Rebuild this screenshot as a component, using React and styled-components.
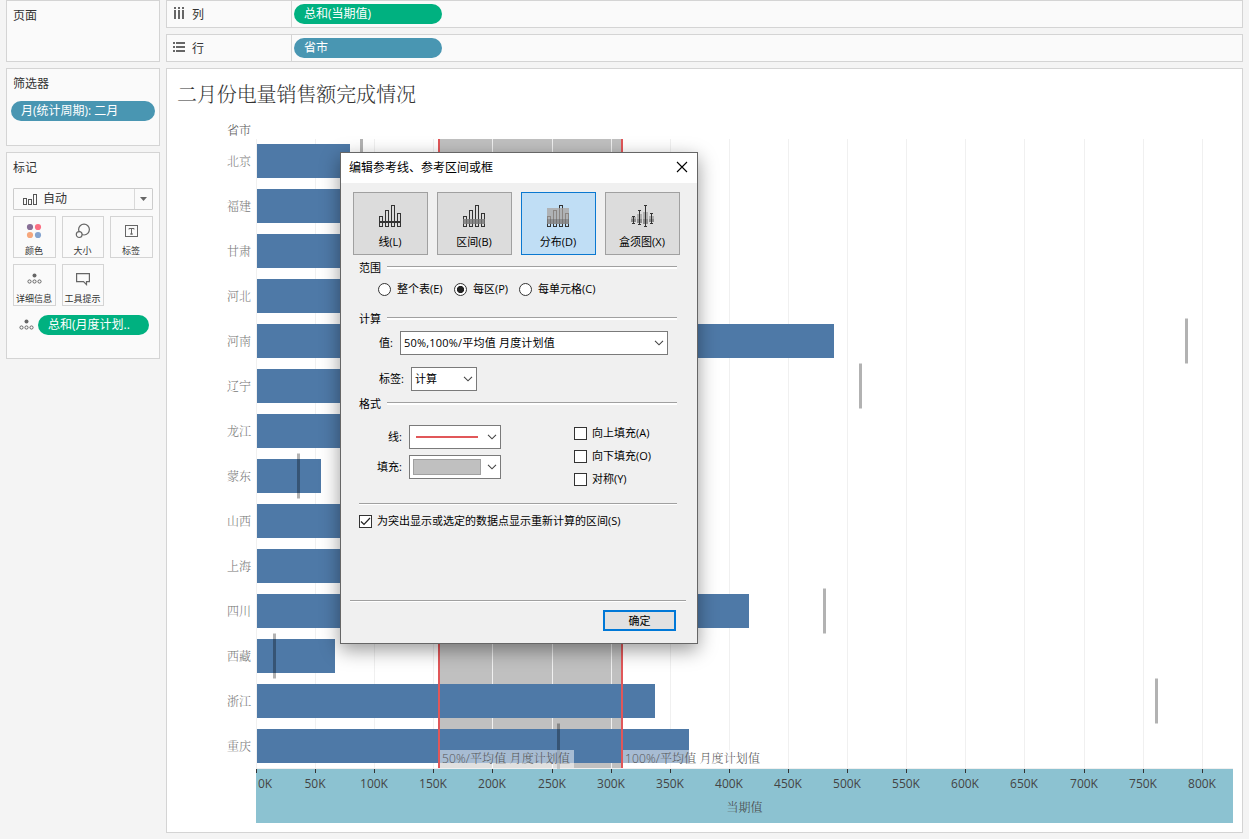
import React from "react";
import styled, { createGlobalStyle, css } from "styled-components";

const UI_FONT = "\"Open Sans\", \"Noto Sans CJK SC\", sans-serif";
const VIZ_FONT = "\"Open Sans\", \"Noto Serif CJK SC\", \"Noto Sans CJK SC\", sans-serif";

const ROW_HEIGHT = 45;
const BAR_HEIGHT = 34;
const PLOT_WIDTH = 977;
const STEP_WIDTH = 59.11;

// bar and target are lengths in px from the zero line
const PROVINCES = [
  { name: "北京", bar: 93, target: 104 },
  { name: "福建", bar: 210 },
  { name: "甘肃", bar: 190 },
  { name: "河北", bar: 330 },
  { name: "河南", bar: 577, target: 929 },
  { name: "辽宁", bar: 300, target: 603 },
  { name: "龙江", bar: 170 },
  { name: "蒙东", bar: 64, target: 41 },
  { name: "山西", bar: 260 },
  { name: "上海", bar: 240 },
  { name: "四川", bar: 492, target: 567 },
  { name: "西藏", bar: 78, target: 17 },
  { name: "浙江", bar: 398, target: 899 },
  { name: "重庆", bar: 432, target: 301 },
];

const PLOT_HEIGHT = PROVINCES.length * ROW_HEIGHT;
const TICKS = Array.from({ length: 17 }, (_, index) => ({
  label: `${index * 50}K`,
  x: Math.round(index * STEP_WIDTH),
}));

const REFERENCE_LINES = [
  { x: 182, label: "50%/平均值 月度计划值", width: 134, length: 128 },
  { x: 365, label: "100%/平均值 月度计划值", width: 140, length: 135 },
];

const BARS = [[0, 11], [6, 5], [12, 0], [18, 8]];
const BOXES = [
  { x: 0, top: 12, bottom: 17, min: 11, max: 19 },
  { x: 6, top: 9, bottom: 18, min: 5, max: 20 },
  { x: 12, top: 7, bottom: 19, min: 0, max: 22 },
  { x: 18, top: 11, bottom: 17, min: 8, max: 19 },
];

function ReferenceIcon({ type }) {
  if (type === "box") {
    return (
      <svg width="23" height="22" shapeRendering="crispEdges">
        {BOXES.map(({ x, top, bottom, min, max }) => (
          <g key={x}>
            <rect x={x} y={top} width="5" height={bottom - top} fill="#b0b0b0" />
            <rect x={x} y="14" width="5" height={bottom - 14} fill="#8e8e8e" />
            <rect x={x + 2} y={min} width="1" height={max - min} fill="#333" />
            <rect x={x + 1} y={min} width="3" height="1" fill="#333" />
            <rect x={x + 1} y={max - 1} width="3" height="1" fill="#333" />
          </g>
        ))}
      </svg>
    );
  }

  return (
    <svg width="22" height="22" shapeRendering="crispEdges">
      {BARS.map(([x, y]) => (
        <rect key={x} x={x + 0.5} y={y + 0.5} width="3" height={21 - y} fill="none" stroke="#333" />
      ))}
      {type === "line" && <rect y="16" width="22" height="2" fill="#333" />}
      {type === "band" && <rect y="14" width="22" height="5" fill="#777" fillOpacity="0.8" />}
      {type === "distribution" && (
        <>
          <rect y="3" width="22" height="11" fill="#a9a39f" fillOpacity="0.75" />
          <rect y="14" width="22" height="5" fill="#858381" fillOpacity="0.85" />
        </>
      )}
    </svg>
  );
}

function DetailIcon() {
  return (
    <svg width="15" height="12" fill="none" stroke="#666">
      <circle cx="7.5" cy="2.5" r="2" fill="#666" stroke="none" />
      <circle cx="2.5" cy="8.5" r="1.6" />
      <circle cx="7.5" cy="8.5" r="1.6" />
      <circle cx="12.5" cy="8.5" r="1.6" />
    </svg>
  );
}

function ColorIcon() {
  return (
    <svg width="16" height="16">
      <circle cx="4" cy="4" r="3.1" fill="#876f96" />
      <circle cx="12" cy="4" r="3.1" fill="#fb6f83" />
      <circle cx="4" cy="12" r="3.1" fill="#f6a77c" />
      <circle cx="12" cy="12" r="3.1" fill="#85a4cf" />
    </svg>
  );
}

function SizeIcon() {
  return (
    <svg width="16" height="16" fill="none" stroke="#666" strokeWidth="1.2">
      <circle cx="9" cy="6.6" r="5.4" />
      <circle cx="4.2" cy="11.6" r="2.9" fill="#fafafa" />
    </svg>
  );
}

function LabelIcon() {
  return (
    <svg width="14" height="14" fill="none" stroke="#666">
      <rect x="1.5" y="1.5" width="12" height="11" />
      <path d="M5 5.5v-1h5v1M7.5 4.5v6M6 10h3" />
    </svg>
  );
}

function TooltipIcon() {
  return (
    <svg width="16" height="14" fill="none" stroke="#666" strokeWidth="1.2">
      <path d="M1.6 1.6h12.8v8h-2.9v3l-3-3h-6.900z" />
    </svg>
  );
}

function Chevron() {
  return (
    <svg width="10" height="6" fill="none" stroke="#444" strokeWidth="1.1">
      <path d="M1 0.8l4 4 4-4" />
    </svg>
  );
}

function ShelfIcon({ isRows }) {
  if (isRows) {
    return (
      <svg width="12" height="10" fill="#666" shapeRendering="crispEdges">
        {[0, 4, 8].map((y) => (
          <g key={y}>
            <rect y={y} width="2" height="2" />
            <rect x="3" y={y} width="9" height="2" />
          </g>
        ))}
      </svg>
    );
  }

  return (
    <svg width="12" height="12" fill="#666" shapeRendering="crispEdges">
      {[1, 5, 9].map((x) => (
        <g key={x}>
          <rect x={x} width="2" height="2" />
          <rect x={x} y="3" width="2" height="9" />
        </g>
      ))}
    </svg>
  );
}

function Plot() {
  return (
    <svg width={PLOT_WIDTH} height={PLOT_HEIGHT}>
      <g shapeRendering="crispEdges">
        <rect x="182" width="185" height={PLOT_HEIGHT - 1} fill="#c0c0c0" />
        {TICKS.map(({ x }) => (
          <rect key={x} x={x} width="1" height={PLOT_HEIGHT} fill="#f0f0f0" />
        ))}
        <rect y={PLOT_HEIGHT - 1} width={PLOT_WIDTH} height="1" fill="#f0f0f0" />
      </g>
      {PROVINCES.map(({ name, bar, target }, index) => (
        <g key={name} transform={`translate(0 ${index * ROW_HEIGHT})`}>
          <rect x="1" y="5" width={bar} height={BAR_HEIGHT} fill="#4e79a7" />
          {target && <rect x={target} y="-0.5" width="3" height={ROW_HEIGHT} fillOpacity="0.3" />}
        </g>
      ))}
      {REFERENCE_LINES.map(({ x, label, width, length }) => (
        <g key={x}>
          <rect x={x} width="2" height={PLOT_HEIGHT - 1} fill="#e15759" />
          <rect x={x + 2} y="611" width={width} height="18" fill="#fff" fillOpacity="0.5" />
          <ReferenceLabel x={x + 4} y="624" textLength={length}>{label}</ReferenceLabel>
        </g>
      ))}
    </svg>
  );
}

function Axis() {
  return (
    <AxisWrapper>
      <svg width={PLOT_WIDTH} height="28">
        {TICKS.map(({ x, label }, index) => (
          <g key={label}>
            <rect x={x} width="1" height="4" fill="#333" shapeRendering="crispEdges" />
            <TickLabel x={index === 0 ? 9 : x} y="19">{label}</TickLabel>
          </g>
        ))}
      </svg>
      <AxisTitle>当期值</AxisTitle>
    </AxisWrapper>
  );
}

function ReferenceDialog() {
  return (
    <Dialog role="dialog">
      <DialogHeader>
        编辑参考线、参考区间或框
        <CloseIcon width="12" height="12">
          <path d="M1 1l10 10M11 1L1 11" />
        </CloseIcon>
      </DialogHeader>
      <TypeButtons>
        <TypeButton><ReferenceIcon type="line" />线(L)</TypeButton>
        <TypeButton><ReferenceIcon type="band" />区间(B)</TypeButton>
        <TypeButton $isActive><ReferenceIcon type="distribution" />分布(D)</TypeButton>
        <TypeButton><ReferenceIcon type="box" />盒须图(X)</TypeButton>
      </TypeButtons>
      <Group $top={5}>范围</Group>
      <RadioRow>
        <Choice $width={76}><Radio />整个表(E)</Choice>
        <Choice $width={65}><Radio $isChecked />每区(P)</Choice>
        <Choice><Radio />每单元格(C)</Choice>
      </RadioRow>
      <Group $top={14}>计算</Group>
      <Field $top={4}>
        <FieldLabel $width={52}>值:</FieldLabel>
        <Select $width={268}>
          <WideText>50%,100%/平均值 月度计划值</WideText>
          <Chevron />
        </Select>
      </Field>
      <Field $top={12}>
        <FieldLabel $width={63}>标签:</FieldLabel>
        <Select $width={66}>
          计算
          <Chevron />
        </Select>
      </Field>
      <Group $top={5}>格式</Group>
      <FormatRow>
        <div>
          <Field>
            <FieldLabel $width={61}>线:</FieldLabel>
            <Select $width={92}>
              <LineSample />
              <Chevron />
            </Select>
          </Field>
          <Field $top={6}>
            <FieldLabel $width={61}>填充:</FieldLabel>
            <Select $width={92}>
              <FillSample />
              <Chevron />
            </Select>
          </Field>
        </div>
        <FillOptions>
          <Choice $gap={5}><Checkbox />向上填充(A)</Choice>
          <Choice $gap={5}><Checkbox />向下填充(O)</Choice>
          <Choice $gap={5}><Checkbox />对称(Y)</Choice>
        </FillOptions>
      </FormatRow>
      <Rule $top={16} $side={18} />
      <Recalculate $gap={5}>
        <Checkbox>
          <svg width="11" height="11" fill="none" stroke="#222" strokeWidth="1.2">
            <path d="M1 5.5l3 3 6-6.5" />
          </svg>
        </Checkbox>
        为突出显示或选定的数据点显示重新计算的区间(S)
      </Recalculate>
      <Rule $top={71} $side={9} />
      <DialogFooter>
        <OkButton>确定</OkButton>
      </DialogFooter>
    </Dialog>
  );
}

function App() {
  return (
    <Page>
      <GlobalStyle />
      <Sidebar>
        <Card $height={62}>
          <CardTitle>页面</CardTitle>
        </Card>
        <Card $height={78}>
          <CardTitle>筛选器</CardTitle>
          <FilterPill $color="#4996b2" $width={144}>月(统计周期): 二月</FilterPill>
        </Card>
        <Card $height={207}>
          <CardTitle>标记</CardTitle>
          <MarkSelect>
            <svg width="14" height="13" fill="none" stroke="#555" shapeRendering="crispEdges">
              <rect x="0.5" y="5.5" width="3" height="6" />
              <rect x="5.5" y="6.5" width="3" height="5" />
              <rect x="10.5" y="1.5" width="3" height="10" />
            </svg>
            <span>自动</span>
            <MarkArrow>
              <svg width="7" height="4" fill="#666"><path d="M0 0h7L3.5 4z" /></svg>
            </MarkArrow>
          </MarkSelect>
          <MarkGrid>
            <MarkButton><MarkIcon><ColorIcon /></MarkIcon>颜色</MarkButton>
            <MarkButton><MarkIcon><SizeIcon /></MarkIcon>大小</MarkButton>
            <MarkButton><MarkIcon><LabelIcon /></MarkIcon>标签</MarkButton>
            <MarkButton><MarkIcon><DetailIcon /></MarkIcon>详细信息</MarkButton>
            <MarkButton><MarkIcon><TooltipIcon /></MarkIcon>工具提示</MarkButton>
          </MarkGrid>
          <DetailRow>
            <DetailIcon />
            <Pill $color="#00b180" $width={111}>总和(月度计划..</Pill>
          </DetailRow>
        </Card>
      </Sidebar>
      <Main>
        <Shelf>
          <ShelfLabel><ShelfIcon /><span>列</span></ShelfLabel>
          <Pill $color="#00b180" $width={148}>总和(当期值)</Pill>
        </Shelf>
        <Shelf>
          <ShelfLabel><ShelfIcon isRows /><span>行</span></ShelfLabel>
          <Pill $color="#4996b2" $width={148}>省市</Pill>
        </Shelf>
        <Viz>
          <VizTitle>二月份电量销售额完成情况</VizTitle>
          <RowHeader>省市</RowHeader>
          <ChartBody>
            <RowLabels>
              {PROVINCES.map(({ name }) => <RowLabel key={name}>{name}</RowLabel>)}
            </RowLabels>
            <div>
              <Plot />
              <Axis />
            </div>
          </ChartBody>
        </Viz>
      </Main>
      <ReferenceDialog />
    </Page>
  );
}

const GlobalStyle = createGlobalStyle`
  * {
    box-sizing: border-box;
  }

  body {
    margin: 0;
    overflow: hidden;
  }

  svg {
    display: block;
    flex: none;
  }

  button {
    margin: 0;
    padding: 0;
    color: inherit;
    font: inherit;
  }
`;

const Page = styled.div`
  position: relative;
  display: flex;
  gap: 6px;
  width: 1249px;
  height: 839px;
  padding: 0 6px;
  background: #f4f4f4;
  color: #333;
  font: 12px/18px ${UI_FONT};
  white-space: nowrap;
`;

const Sidebar = styled.aside`
  display: flex;
  flex-direction: column;
  gap: 6px;
  width: 154px;
`;

const Card = styled.section`
  height: ${({ $height }) => $height}px;
  border: 1px solid #d4d4d4;
  background: #fafafa;
`;

const CardTitle = styled.div`
  padding: 6px 6px 0;
`;

const Pill = styled.div`
  flex: none;
  width: ${({ $width }) => $width}px;
  height: 20px;
  padding-left: 10px;
  border-radius: 10px;
  background: ${({ $color }) => $color};
  color: #fff;
  line-height: 20px;
`;

const FilterPill = styled(Pill)`
  margin: 8px 0 0 4px;
`;

const MarkSelect = styled.div`
  display: flex;
  align-items: center;
  gap: 6px;
  height: 22px;
  margin: 11px 6px 6px;
  padding-left: 9px;
  border: 1px solid #ccc;
  border-radius: 1px;
`;

const MarkArrow = styled.div`
  display: flex;
  align-items: center;
  justify-content: center;
  width: 18px;
  height: 20px;
  margin-left: auto;
  border-left: 1px solid #d9d9d9;
`;

const MarkGrid = styled.div`
  display: grid;
  grid-template-columns: 43px 42px 43px;
  gap: 6px;
  padding-left: 6px;
`;

const MarkButton = styled.button`
  height: 42px;
  padding-right: 1px;
  border: 1px solid #d4d4d4;
  background: #fafafa;
  font-size: 9px;
  line-height: 12px;
`;

const MarkIcon = styled.div`
  display: flex;
  align-items: center;
  justify-content: center;
  height: 28px;
`;

const DetailRow = styled.div`
  display: flex;
  align-items: center;
  gap: 4px;
  margin: 9px 0 0 12px;
`;

const Main = styled.main`
  display: flex;
  flex-direction: column;
  gap: 6px;
  width: 1077px;
`;

const Shelf = styled.div`
  display: flex;
  align-items: center;
  height: 28px;
  border: 1px solid #d4d4d4;
  background: #fafafa;
`;

const ShelfLabel = styled.div`
  display: flex;
  align-items: center;
  gap: 7px;
  width: 125px;
  height: 26px;
  margin-right: 2px;
  padding-left: 6px;
  border-right: 1px solid #d4d4d4;

  svg {
    margin-bottom: 2px;
  }

  span {
    padding-top: 2px;
  }
`;

const Viz = styled.section`
  height: 765px;
  border: 1px solid #d4d4d4;
  background: #fff;
  font-family: ${VIZ_FONT};
  font-weight: 300;
`;

const VizTitle = styled.h1`
  margin: 0;
  padding: 12px 0 0 10px;
  font-size: 20px;
  font-weight: 300;
  letter-spacing: -0.1px;
  line-height: 28px;
`;

const RowHeader = styled.div`
  width: 84px;
  padding-top: 13px;
  color: #555;
  line-height: 17px;
  text-align: right;
`;

const ChartBody = styled.div`
  display: flex;
`;

const RowLabels = styled.div`
  width: 89px;
`;

const RowLabel = styled.div`
  height: ${ROW_HEIGHT}px;
  padding-right: 5px;
  color: #777;
  line-height: ${ROW_HEIGHT}px;
  text-align: right;
`;

const AxisWrapper = styled.div`
  height: 54px;
  background: #8cc2d1;
`;

const AxisTitle = styled.div`
  padding-top: 2px;
  color: #444;
  text-align: center;
`;

const TickLabel = styled.text`
  fill: #444;
  font-size: 12px;
  font-weight: 400;
  text-anchor: middle;
`;

const ReferenceLabel = styled.text`
  fill: #555;
  font-size: 12px;
`;

const Dialog = styled.div`
  position: absolute;
  top: 152px;
  left: 340px;
  width: 358px;
  height: 492px;
  border: 1px solid #666;
  background: #f0f0f0;
  box-shadow: 0 6px 18px rgba(0, 0, 0, 0.4);
  color: #000;
  font-size: 11px;
  line-height: 16px;
`;

const DialogHeader = styled.div`
  display: flex;
  align-items: center;
  justify-content: space-between;
  height: 30px;
  padding: 0 9px 0 8px;
  background: #fff;
  font-size: 12px;
`;

const CloseIcon = styled.svg`
  margin-bottom: 2px;
  stroke: #000;
  stroke-width: 1.1;
`;

const TypeButtons = styled.div`
  display: flex;
  gap: 9px;
  padding: 9px 12px 0;
`;

const TypeButton = styled.button`
  display: flex;
  flex-direction: column;
  align-items: center;
  gap: 7px;
  width: 75px;
  height: 63px;
  padding: 12px 1px 0 0;
  border: 1px solid #a0a0a0;
  background: #dcdcdc;

  ${({ $isActive }) => $isActive && css`
    border-color: #0a78d0;
    background: #c0def5;
  `}
`;

const ruleLine = css`
  height: 2px;
  border-top: 1px solid #a0a0a0;
  background: #fff;
`;

const Group = styled.div`
  display: flex;
  gap: 6px;
  margin-top: ${({ $top }) => $top}px;
  padding: 0 20px 0 18px;

  &::after {
    ${ruleLine}
    flex: 1;
    margin-top: 6px;
    content: "";
  }
`;

const Rule = styled.div`
  ${ruleLine}
  margin: ${({ $top, $side }) => `${$top}px ${$side + 2}px 0 ${$side}px`};
`;

const RadioRow = styled.div`
  display: flex;
  margin-top: 5px;
  padding-left: 37px;
`;

const Choice = styled.label`
  display: flex;
  align-items: center;
  gap: ${({ $gap = 6 }) => $gap}px;
  width: ${({ $width }) => ($width ? `${$width}px` : "auto")};
`;

const Radio = styled.span`
  flex: none;
  width: 13px;
  height: 13px;
  border: 1px solid #333;
  border-radius: 50%;
  background: ${({ $isChecked }) => ($isChecked ? "radial-gradient(circle, #222 3.2px, #fff 4px)" : "#fff")};
`;

const Checkbox = styled.span`
  flex: none;
  width: 13px;
  height: 13px;
  border: 1px solid #333;
  background: #fff;
`;

const Field = styled.div`
  display: flex;
  align-items: center;
  gap: 7px;
  margin-top: ${({ $top = 0 }) => $top}px;
`;

const FieldLabel = styled.span`
  width: ${({ $width }) => $width}px;
  text-align: right;
`;

const Select = styled.div`
  display: flex;
  align-items: center;
  justify-content: space-between;
  width: ${({ $width }) => $width}px;
  height: 24px;
  padding: 0 3px;
  border: 1px solid #7a7a7a;
  background: #fff;
`;

const WideText = styled.span`
  letter-spacing: 0.2px;
`;

const LineSample = styled.span`
  width: 62px;
  height: 2px;
  margin-left: 3px;
  background: #e15759;
`;

const FillSample = styled.span`
  width: 68px;
  height: 16px;
  border: 1px solid #a0a0a0;
  background: #c0c0c0;
`;

const FormatRow = styled.div`
  display: flex;
  justify-content: space-between;
  margin-top: 13px;
  padding-right: 46px;
`;

const FillOptions = styled.div`
  display: flex;
  flex-direction: column;
  gap: 7px;
`;

const Recalculate = styled(Choice)`
  margin: 8px 0 0 18px;
`;

const DialogFooter = styled.div`
  display: flex;
  justify-content: flex-end;
  padding: 8px 21px 0 0;
`;

const OkButton = styled.button`
  width: 73px;
  height: 21px;
  border: 2px solid #0078d7;
  background: #e1e1e1;
`;

export default App;
